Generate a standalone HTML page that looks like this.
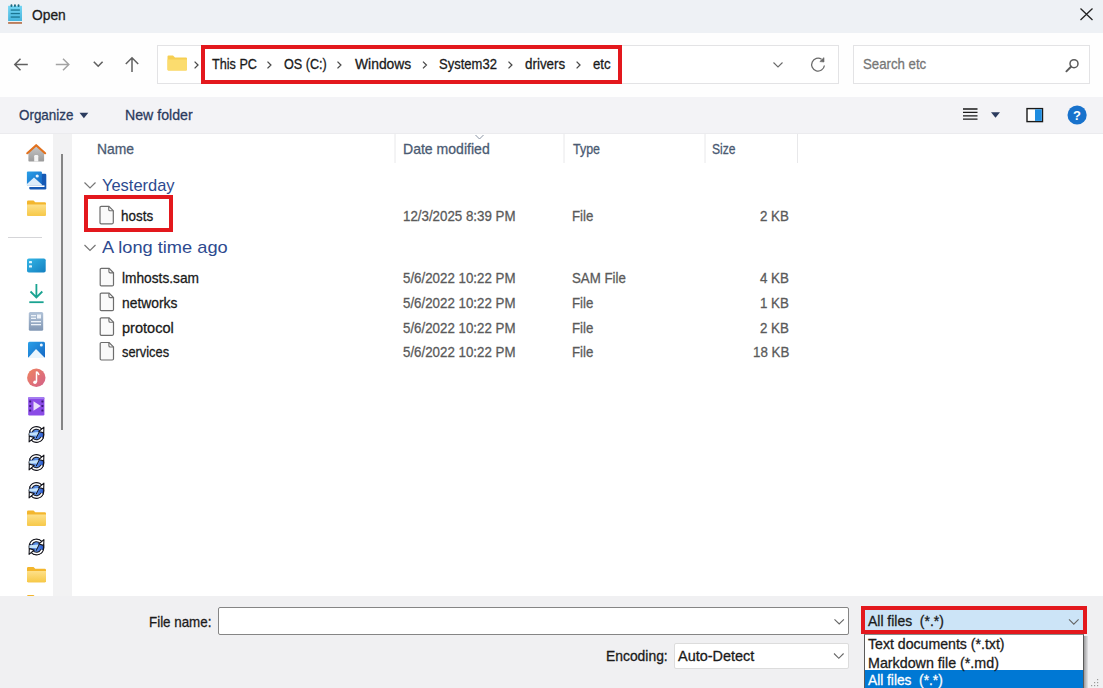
<!DOCTYPE html>
<html><head><meta charset="utf-8">
<style>
*{margin:0;padding:0;box-sizing:border-box}
html,body{width:1103px;height:688px;overflow:hidden;background:#fff;font-family:"Liberation Sans",sans-serif;color:#1a1a1a}
.a{position:absolute}
.t{position:absolute;white-space:nowrap;line-height:1;font-size:13.5px}
svg{position:absolute;overflow:visible}
.t{transform-origin:0 0;-webkit-text-stroke:0.3px currentColor}
</style></head><body>

<!-- title bar -->
<div class="a" style="left:0;top:0;width:1103px;height:33px;background:#eef1f5"></div>
<svg style="left:0;top:0" width="40" height="30">
  <defs><linearGradient id="np" x1="0" y1="0" x2="0" y2="1"><stop offset="0" stop-color="#74d6f4"/><stop offset="1" stop-color="#45b4dc"/></linearGradient></defs>
  <rect x="8.1" y="5.8" width="13.9" height="15.4" fill="url(#np)"/>
  <rect x="8.1" y="21.2" width="13.9" height="0.9" fill="#f4f4f4"/>
  <rect x="8.1" y="22.1" width="13.9" height="1.7" fill="#b5704c"/>
  <rect x="10.5" y="4.3" width="1.9" height="2.6" rx="0.9" fill="#1e6a80"/>
  <rect x="14" y="4.3" width="1.9" height="2.6" rx="0.9" fill="#1e6a80"/>
  <rect x="17.6" y="4.3" width="1.9" height="2.6" rx="0.9" fill="#1e6a80"/>
  <rect x="10.7" y="9.4" width="9.2" height="1.3" fill="#1a7592"/>
  <rect x="10.7" y="12.9" width="9.2" height="1.3" fill="#1a7592"/>
  <rect x="10.7" y="16.4" width="9.2" height="1.3" fill="#1a7592"/>
</svg>
<svg style="left:1080px;top:8px" width="14" height="13"><path d="M0.5 0.5 L12.5 12 M12.5 0.5 L0.5 12" stroke="#222" stroke-width="1.3" fill="none"/></svg>

<!-- address row -->
<div class="a" style="left:0;top:33px;width:1103px;height:64px;background:#fefefe"></div>
<!-- nav arrows -->
<svg style="left:0;top:40px" width="150" height="50">
  <path d="M14.8 24.5 H27.8 M20.5 18.8 L14.8 24.5 L20.5 30.2" stroke="#606060" stroke-width="1.5" fill="none"/>
  <path d="M55.8 24.5 H68.8 M63 18.8 L68.8 24.5 L63 30.2" stroke="#a3a3a3" stroke-width="1.5" fill="none"/>
  <path d="M93.8 21.8 L98.2 26.2 L102.6 21.8" stroke="#606060" stroke-width="1.6" fill="none"/>
  <path d="M132 17.8 V32 M125.8 24 L132 17.8 L138.2 24" stroke="#606060" stroke-width="1.5" fill="none"/>
</svg>
<!-- address box -->
<div class="a" style="left:157px;top:45px;width:682px;height:39px;border:1px solid #e3e3e5;background:#fff"></div>
<svg style="left:160px;top:50px" width="50" height="30">
  <path d="M7.5 6.5 Q7.5 5.5 8.5 5.5 H13 L15 7.5 H26 Q27 7.5 27 8.5 V19.5 Q27 20.5 26 20.5 H8.5 Q7.5 20.5 7.5 19.5 Z" fill="#f6cf52"/>
  <path d="M7.5 9.5 H27 V19.5 Q27 20.5 26 20.5 H8.5 Q7.5 20.5 7.5 19.5 Z" fill="#fbdc6e"/>
  <path d="M34.6 11.6 L38 15 L34.6 18.4" stroke="#4a4a4a" stroke-width="1.3" fill="none"/>
</svg>
<div class="a" style="left:201px;top:45px;width:421px;height:39px;border:4.5px solid #e3181d"></div>
<svg style="left:0;top:0" width="1103" height="100">
  <path d="M267.5 61.6 L270.9 65 L267.5 68.4 M337.5 61.6 L340.9 65 L337.5 68.4 M423.0 61.6 L426.4 65 L423.0 68.4 M508.5 61.6 L511.9 65 L508.5 68.4 M576.6 61.6 L580.0 65 L576.6 68.4" stroke="#4a4a4a" stroke-width="1.3" fill="none"/>
  <path d="M773.5 62.5 L778 67 L782.5 62.5" stroke="#6a6a6a" stroke-width="1.1" fill="none"/>
  <path d="M824.4 65.5 A6.4 6.4 0 1 1 821.6 59.3" stroke="#6a6a6a" stroke-width="1.3" fill="none"/>
  <path d="M819.8 61.6 L824 62 L824 57.6 Z" fill="#6a6a6a" stroke="#6a6a6a" stroke-width="0.6" stroke-linejoin="round"/>
</svg>
<!-- search box -->
<div class="a" style="left:853px;top:45px;width:237px;height:39px;border:1px solid #e3e3e5;background:#fff"></div>
<svg style="left:1060px;top:55px" width="25" height="20">
  <circle cx="14" cy="8.7" r="4" stroke="#5a5a5a" stroke-width="1.5" fill="none"/>
  <path d="M11.2 11.5 L6.4 16.3" stroke="#5a5a5a" stroke-width="1.9" fill="none" stroke-linecap="round"/>
</svg>

<!-- command bar -->
<div class="a" style="left:0;top:97px;width:1103px;height:36px;background:#f3f3f6"></div>
<div class="a" style="left:0;top:133px;width:1103px;height:1px;background:#ebebee"></div>
<svg style="left:0;top:100px" width="200" height="30">
  <path d="M79.5 12.8 H88.3 L83.9 18.3 Z" fill="#2b3b5e"/>
</svg>
<svg style="left:950px;top:100px" width="153" height="30">
  <path d="M13 9 H27.5 M13 12.4 H27.5 M13 15.8 H27.5 M13 19.2 H27.5" stroke="#1a1a1a" stroke-width="1.3" fill="none"/>
  <path d="M41 12.3 H50 L45.5 17.8 Z" fill="#2b3b5e"/>
  <rect x="77" y="8.6" width="15.5" height="13" fill="#fff" stroke="#1a1a1a" stroke-width="1.4"/>
  <rect x="85" y="9.3" width="6.8" height="11.6" fill="#1f8de0"/>
  <circle cx="127.1" cy="15" r="9.6" fill="#1872cc"/>
  <text x="127.1" y="19.6" font-family="Liberation Sans" font-weight="bold" font-size="13" fill="#fff" text-anchor="middle">?</text>
</svg>

<!-- nav pane -->
<div class="a" style="left:0;top:134px;width:53px;height:462px;background:#fff"></div>
<div class="a" style="left:53px;top:134px;width:19px;height:462px;background:#f2f2f3"></div>
<div class="a" style="left:61px;top:154px;width:2px;height:276px;background:#858585"></div>
<div class="a" style="left:8px;top:237px;width:34px;height:1px;background:#d5d5d8"></div>
<svg style="left:0;top:130px" width="53" height="470">
  <defs>
    <linearGradient id="fold" x1="0" y1="0" x2="0" y2="1"><stop offset="0" stop-color="#fde08a"/><stop offset="1" stop-color="#f7c948"/></linearGradient>
    <linearGradient id="blu" x1="0" y1="0" x2="1" y2="1"><stop offset="0" stop-color="#2aa0e8"/><stop offset="1" stop-color="#1567c4"/></linearGradient>
    <linearGradient id="desk" x1="0" y1="0" x2="1" y2="1"><stop offset="0" stop-color="#34b6e6"/><stop offset="1" stop-color="#137fc0"/></linearGradient>
    <linearGradient id="doc" x1="0" y1="0" x2="0" y2="1"><stop offset="0" stop-color="#b2c3d8"/><stop offset="1" stop-color="#8197b4"/></linearGradient>
    <linearGradient id="mus" x1="0" y1="0" x2="1" y2="1"><stop offset="0" stop-color="#f08560"/><stop offset="1" stop-color="#d2608a"/></linearGradient>
    <linearGradient id="sync" x1="0" y1="0" x2="1" y2="0"><stop offset="0" stop-color="#12308e"/><stop offset="0.45" stop-color="#5f95ea"/><stop offset="1" stop-color="#2553c8"/></linearGradient>
    <g id="fic">
      <path d="M0 1.2 Q0 0 1.2 0 H6.5 L8.3 1.8 H17.7 Q19 1.8 19 3 V14 Q19 15.2 17.7 15.2 H1.2 Q0 15.2 0 14 Z" fill="#f3b62d"/>
      <path d="M0 4 H19 V14 Q19 15.2 17.7 15.2 H1.2 Q0 15.2 0 14 Z" fill="url(#fold)"/>
    </g>
    <g id="sic">
      <circle cx="8.5" cy="8.5" r="7.3" fill="url(#sync)" stroke="#15151c" stroke-width="1.4"/>
      <path d="M1.4 6.8 L11.2 5.9 L9.3 9.5 L1.4 9.7 Z" fill="#c2e2fb"/>
      <path d="M11.3 5.7 L8.1 12.3" stroke="#15151c" stroke-width="1"/>
      <path d="M2.9 5.6 A6.1 6.1 0 0 1 13 3.9" stroke="#15151c" stroke-width="3.6" fill="none"/>
      <path d="M2.9 5.6 A6.1 6.1 0 0 1 13 3.9" stroke="#fff" stroke-width="1.5" fill="none"/>
      <path d="M15.9 1.2 L15.7 6.9 L10.8 5.5 Z" fill="#fff" stroke="#15151c" stroke-width="1.1" stroke-linejoin="round"/>
      <path d="M14.1 11.4 A6.1 6.1 0 0 1 4 13.1" stroke="#15151c" stroke-width="3.6" fill="none"/>
      <path d="M14.1 11.4 A6.1 6.1 0 0 1 4 13.1" stroke="#fff" stroke-width="1.5" fill="none"/>
      <path d="M1.1 15.8 L1.3 10.1 L6.2 11.5 Z" fill="#fff" stroke="#15151c" stroke-width="1.1" stroke-linejoin="round"/>
    </g>
  </defs>
  <!-- home -->
  <defs><linearGradient id="hg" x1="0" y1="0" x2="0" y2="1"><stop offset="0" stop-color="#c9c9c9"/><stop offset="1" stop-color="#9a9a9a"/></linearGradient></defs>
  <path d="M28.4 22.5 L36.2 15.5 L44.1 22.5 V30.8 Q44.1 31.5 43.4 31.5 H29.1 Q28.4 31.5 28.4 30.8 Z" fill="url(#hg)"/>
  <path d="M34.2 31.5 V26.2 Q34.2 25 35.4 25 H37.1 Q38.3 25 38.3 26.2 V31.5 Z" fill="#f4f4f4"/>
  <path d="M27.3 23.2 L36.2 15.2 L45.1 23.2" stroke="#e2711d" stroke-width="2.2" fill="none" stroke-linecap="round" stroke-linejoin="round"/>
  <!-- pictures -->
  <rect x="29.3" y="43.8" width="17" height="15.6" rx="1.2" fill="#1559b5"/>
  <rect x="26.9" y="41.4" width="15" height="14" rx="1" fill="url(#blu)"/>
  <path d="M26.9 55.4 L26.9 54 L34 47.5 L41.9 54.5 V55.4 Z" fill="#dcecfa"/>
  <rect x="28.5" y="55.4" width="16" height="1.6" fill="#fff"/>
  <circle cx="37.2" cy="46" r="1.6" fill="#e8f4fd"/>
  <!-- folder -->
  <use href="#fic" x="27" y="70.5"/>
  <!-- desktop -->
  <rect x="27" y="128.5" width="18.7" height="14" rx="1.8" fill="url(#desk)"/>
  <rect x="29" y="131" width="3" height="2.3" rx="0.6" fill="#dff4fd"/>
  <rect x="29" y="135.2" width="3" height="2.3" rx="0.6" fill="#dff4fd"/>
  <!-- downloads -->
  <path d="M36.4 154 V167.5 M30.5 161.5 L36.4 167.5 L42.3 161.5" stroke="#1aa391" stroke-width="1.8" fill="none"/>
  <rect x="29.3" y="171.3" width="14.3" height="1.8" fill="#1aa391"/>
  <!-- documents -->
  <rect x="28.8" y="182" width="14.4" height="18.8" rx="1.5" fill="url(#doc)"/>
  <rect x="31" y="185" width="5" height="1.3" fill="#eef3f9"/>
  <rect x="31" y="187.7" width="5" height="1.3" fill="#eef3f9"/>
  <rect x="37" y="184.5" width="4" height="4" fill="#eef3f9"/>
  <rect x="31" y="191" width="10" height="1.3" fill="#eef3f9"/>
  <rect x="31" y="194" width="10" height="1.3" fill="#eef3f9"/>
  <!-- pictures 2 -->
  <rect x="28" y="211.7" width="17" height="16.3" rx="1.5" fill="url(#blu)"/>
  <path d="M28 228 L36 219 L45 228 Z" fill="#eaf5fd"/>
  <circle cx="41.3" cy="215" r="1.5" fill="#eaf5fd"/>
  <!-- music -->
  <circle cx="36.3" cy="247.8" r="9.2" fill="url(#mus)"/>
  <path d="M36.5 241.5 V252 M36.5 241.5 Q38.5 243 39 245" stroke="#fff" stroke-width="1.5" fill="none"/>
  <circle cx="35" cy="252.2" r="1.8" fill="#fff"/>
  <!-- video -->
  <rect x="28.2" y="267" width="16.2" height="18.4" rx="1.2" fill="#8a4be6"/>
  <rect x="28.2" y="267" width="16.2" height="2" rx="1" fill="#a47cf0"/>
  <path d="M33.5 271.3 V280.7 L40.8 276 Z" fill="#eadffc"/>
  <g fill="#3d1a7a"><rect x="29.2" y="270.4" width="2" height="2" rx="0.4"/><rect x="29.2" y="275" width="2" height="2" rx="0.4"/><rect x="29.2" y="279.6" width="2" height="2" rx="0.4"/>
  <rect x="41.4" y="270.4" width="2" height="2" rx="0.4"/><rect x="41.4" y="275" width="2" height="2" rx="0.4"/><rect x="41.4" y="279.6" width="2" height="2" rx="0.4"/></g>
  <use href="#sic" x="28" y="296"/>
  <use href="#sic" x="28" y="324"/>
  <use href="#sic" x="28" y="352"/>
  <use href="#fic" x="27" y="380.5"/>
  <use href="#sic" x="28" y="408.5"/>
  <use href="#fic" x="27" y="437"/>
  <use href="#fic" x="27" y="465"/>
</svg>

<!-- column header -->
<svg style="left:0;top:0" width="1103" height="600">
  <path d="M395 134 V163 M564 134 V163 M705 134 V163 M797.5 134 V163" stroke="#e8e8ea" stroke-width="1"/>
  <path d="M475.5 135 L479.5 139 L483.5 135" stroke="#8a94a4" stroke-width="1" fill="none"/>
  <path d="M84.5 182.5 L90 188 L95.5 182.5 M84.5 245 L90 250.5 L95.5 245" stroke="#777" stroke-width="1.2" fill="none"/>
  <defs>
    <g id="fdoc">
      <path d="M0.6 1.8 Q0.6 0.6 1.8 0.6 H9.5 L13.9 5 V16.9 Q13.9 18.1 12.7 18.1 H1.8 Q0.6 18.1 0.6 16.9 Z" fill="#fafafa" stroke="#6d6d6d" stroke-width="1.2"/>
      <path d="M9.3 0.8 V3.8 Q9.3 5.1 10.6 5.1 H13.7" stroke="#6d6d6d" stroke-width="1.1" fill="none"/>
    </g>
  </defs>
  <use href="#fdoc" x="99.4" y="205.7"/>
  <use href="#fdoc" x="99.6" y="267.8"/>
  <use href="#fdoc" x="99.6" y="292.5"/>
  <use href="#fdoc" x="99.6" y="317.2"/>
  <use href="#fdoc" x="99.6" y="341.9"/>
</svg>

<div class="a" style="left:84px;top:194.5px;width:89px;height:37px;border:4.5px solid #e3181d"></div>


<!-- footer -->
<div class="a" style="left:0;top:596px;width:1103px;height:92px;background:#f0f0f2"></div>
<div class="a" style="left:218px;top:607px;width:631px;height:28px;border:1px solid #858585;border-radius:2px;background:#fff"></div>
<div class="a" style="left:674px;top:642.5px;width:175px;height:26.5px;border:1px solid #dcdcdc;border-radius:2px;background:#fff"></div>
<div class="a" style="left:861px;top:605.5px;width:226px;height:28.5px;border:4.2px solid #e3181d;background:#cce4f7"></div>
<!-- dropdown -->
<div class="a" style="left:1084px;top:636px;width:4px;height:52px;background:linear-gradient(90deg,rgba(0,0,0,0.35),rgba(0,0,0,0.05))"></div>
<div class="a" style="left:863.5px;top:634.3px;width:220.5px;height:60px;border:1px solid #5a5a5a;border-top-color:#8a8a8a;background:#fff"></div>
<div class="a" style="left:864.5px;top:670.3px;width:218.5px;height:20px;background:#0078d4"></div>
<svg style="left:1088px;top:676px" width="15" height="12">
  <g fill="#9a9a9a"><rect x="9" y="3" width="1.2" height="1.2"/><rect x="6" y="6" width="1.2" height="1.2"/><rect x="9" y="6" width="1.2" height="1.2"/><rect x="3" y="9" width="1.2" height="1.2"/><rect x="6" y="9" width="1.2" height="1.2"/><rect x="9" y="9" width="1.2" height="1.2"/></g>
</svg>
<svg style="left:0;top:590px" width="1103" height="98">
  <path d="M834.5 29.3 L839.2 34 L843.9 29.3 M834 63.5 L838.8 68.3 L843.6 63.5 M1069 29.3 L1073.8 34.1 L1078.6 29.3" stroke="#666" stroke-width="1.1" fill="none"/>
</svg>

<div class="t" style="left:31.70px;top:7.10px;font-size:15px;color:#1b1b1b;transform:scaleX(0.9185)">Open</div>
<div class="t" style="left:211.60px;top:56.30px;font-size:15px;color:#1a1a1a;transform:scaleX(0.8436)">This PC</div>
<div class="t" style="left:284.00px;top:56.30px;font-size:15px;color:#1a1a1a;transform:scaleX(0.8419)">OS (C:)</div>
<div class="t" style="left:355.00px;top:56.30px;font-size:15px;color:#1a1a1a;transform:scaleX(0.9251)">Windows</div>
<div class="t" style="left:439.30px;top:56.30px;font-size:15px;color:#1a1a1a;transform:scaleX(0.8682)">System32</div>
<div class="t" style="left:525.00px;top:56.30px;font-size:15px;color:#1a1a1a;transform:scaleX(0.8930)">drivers</div>
<div class="t" style="left:593.00px;top:56.30px;font-size:15px;color:#1a1a1a;transform:scaleX(0.8796)">etc</div>
<div class="t" style="left:863.40px;top:56.30px;font-size:15px;color:#767676;transform:scaleX(0.8815)">Search etc</div>
<div class="t" style="left:18.50px;top:107.30px;font-size:15px;color:#2b3b5e;transform:scaleX(0.8937)">Organize</div>
<div class="t" style="left:125.00px;top:107.30px;font-size:15px;color:#2b3b5e;transform:scaleX(0.9428)">New folder</div>
<div class="t" style="left:96.80px;top:140.70px;font-size:15px;color:#4a5a72;transform:scaleX(0.9245)">Name</div>
<div class="t" style="left:403.00px;top:140.70px;font-size:15px;color:#4a5a72;transform:scaleX(0.9368)">Date modified</div>
<div class="t" style="left:572.60px;top:140.70px;font-size:15px;color:#4a5a72;transform:scaleX(0.8303)">Type</div>
<div class="t" style="left:712.30px;top:140.70px;font-size:15px;color:#4a5a72;transform:scaleX(0.8055)">Size</div>
<div class="t" style="left:101.80px;top:176.71px;font-size:17px;color:#2d4a8f;transform:scaleX(0.9682);-webkit-text-stroke:0">Yesterday</div>
<div class="t" style="left:101.80px;top:238.71px;font-size:17px;color:#2d4a8f;transform:scaleX(1.0725);-webkit-text-stroke:0">A long time ago</div>
<div class="t" style="left:121.40px;top:208.00px;font-size:15px;color:#1a1a1a;transform:scaleX(0.8954)">hosts</div>
<div class="t" style="left:121.80px;top:270.10px;font-size:15px;color:#1a1a1a;transform:scaleX(0.9147)">lmhosts.sam</div>
<div class="t" style="left:121.50px;top:294.90px;font-size:15px;color:#1a1a1a;transform:scaleX(0.9231)">networks</div>
<div class="t" style="left:121.50px;top:319.60px;font-size:15px;color:#1a1a1a;transform:scaleX(0.9706)">protocol</div>
<div class="t" style="left:121.50px;top:344.00px;font-size:15px;color:#1a1a1a;transform:scaleX(0.8561)">services</div>
<div class="t" style="left:149.30px;top:613.50px;font-size:15px;color:#1a1a1a;transform:scaleX(0.8912)">File name:</div>
<div class="t" style="left:605.70px;top:648.30px;font-size:15px;color:#1a1a1a;transform:scaleX(0.9248)">Encoding:</div>
<div class="t" style="left:678.30px;top:648.30px;font-size:15px;color:#1a1a1a;transform:scaleX(0.9621)">Auto-Detect</div>
<div class="t" style="left:868.00px;top:613.20px;font-size:15px;color:#1a1a1a;transform:scaleX(0.9281)">All files&nbsp; (*.*)</div>
<div class="t" style="left:868.00px;top:636.30px;font-size:15px;color:#1a1a1a;transform:scaleX(0.9411)">Text documents (*.txt)</div>
<div class="t" style="left:868.00px;top:654.70px;font-size:15px;color:#1a1a1a;transform:scaleX(0.9518)">Markdown file (*.md)</div>
<div class="t" style="left:868.00px;top:671.60px;font-size:15px;color:#ffffff;transform:scaleX(0.9146)">All files&nbsp; (*.*)</div>
<div class="t" style="left:403.10px;top:208.00px;font-size:15px;color:#5a5a5a;transform:scaleX(0.8875)">12/3/2025 8:39 PM</div>
<div class="t" style="left:571.50px;top:208.00px;font-size:15px;color:#5a5a5a;transform:scaleX(0.8843)">File</div>
<div class="t" style="left:760.04px;top:208.00px;font-size:15px;color:#5a5a5a;transform:scaleX(0.8875)">2 KB</div>
<div class="t" style="left:403.10px;top:270.10px;font-size:15px;color:#5a5a5a;transform:scaleX(0.8875)">5/6/2022 10:22 PM</div>
<div class="t" style="left:571.50px;top:270.10px;font-size:15px;color:#5a5a5a;transform:scaleX(0.8843)">SAM File</div>
<div class="t" style="left:760.04px;top:270.10px;font-size:15px;color:#5a5a5a;transform:scaleX(0.8875)">4 KB</div>
<div class="t" style="left:403.10px;top:294.90px;font-size:15px;color:#5a5a5a;transform:scaleX(0.8875)">5/6/2022 10:22 PM</div>
<div class="t" style="left:571.50px;top:294.90px;font-size:15px;color:#5a5a5a;transform:scaleX(0.8843)">File</div>
<div class="t" style="left:760.04px;top:294.90px;font-size:15px;color:#5a5a5a;transform:scaleX(0.8875)">1 KB</div>
<div class="t" style="left:403.10px;top:319.60px;font-size:15px;color:#5a5a5a;transform:scaleX(0.8875)">5/6/2022 10:22 PM</div>
<div class="t" style="left:571.50px;top:319.60px;font-size:15px;color:#5a5a5a;transform:scaleX(0.8843)">File</div>
<div class="t" style="left:760.04px;top:319.60px;font-size:15px;color:#5a5a5a;transform:scaleX(0.8875)">2 KB</div>
<div class="t" style="left:403.10px;top:344.00px;font-size:15px;color:#5a5a5a;transform:scaleX(0.8875)">5/6/2022 10:22 PM</div>
<div class="t" style="left:571.50px;top:344.00px;font-size:15px;color:#5a5a5a;transform:scaleX(0.8843)">File</div>
<div class="t" style="left:752.64px;top:344.00px;font-size:15px;color:#5a5a5a;transform:scaleX(0.8875)">18 KB</div>
</body></html>
